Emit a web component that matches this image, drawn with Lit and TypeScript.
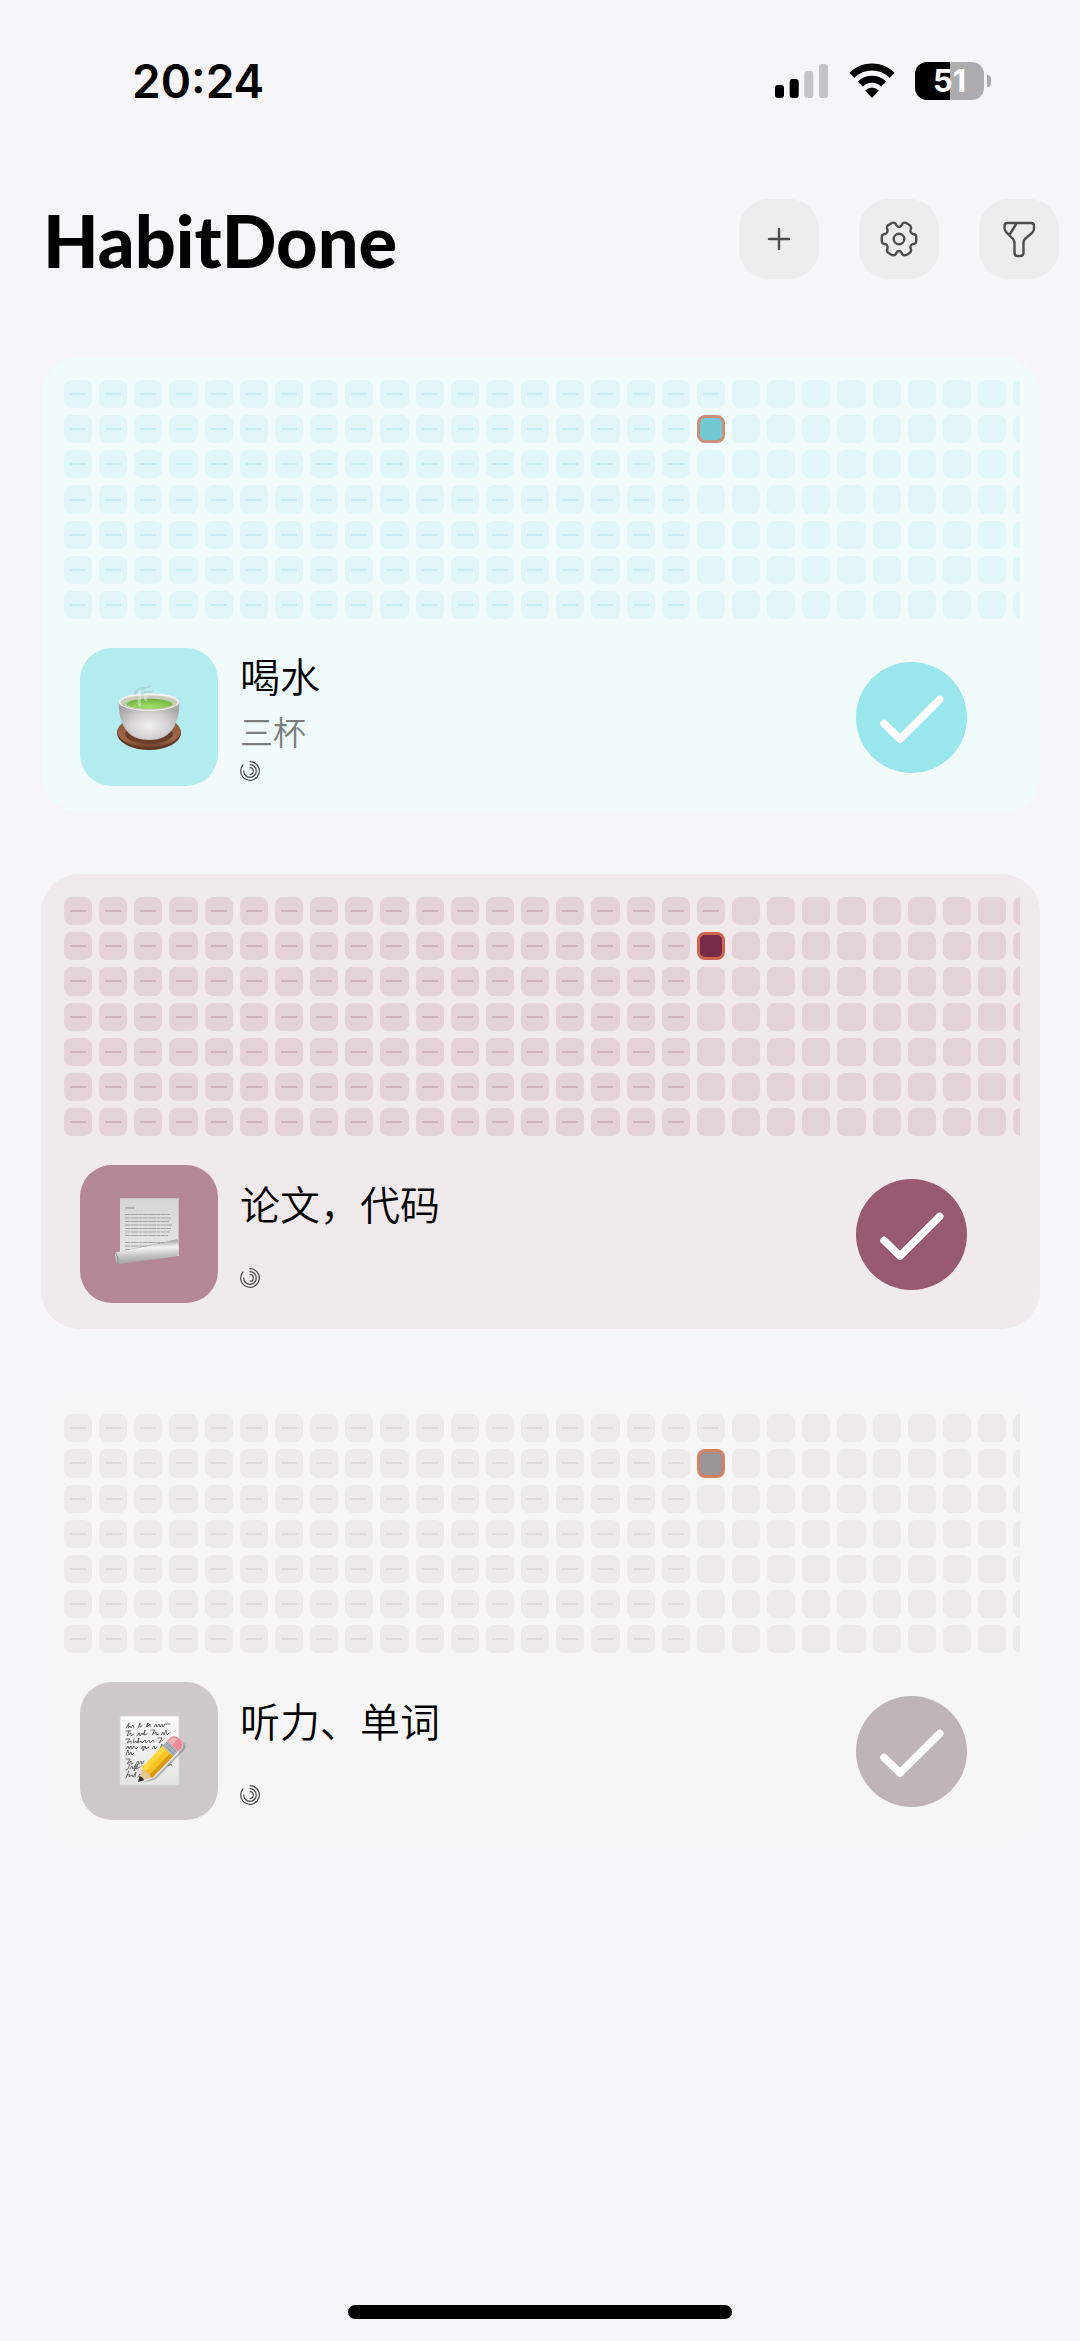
import { LitElement, html, css, svg, nothing } from "lit";
import { customElement, property } from "lit/decorators.js";

interface Habit {
  name: string;
  note: string;
  theme: string;
  picture: string;
}

const HABITS: Habit[] = [
  { name: "喝水", note: "三杯", theme: "aqua", picture: "tea" },
  { name: "论文，代码", note: "", theme: "plum", picture: "page" },
  { name: "听力、单词", note: "", theme: "stone", picture: "memo" },
];

const WEEKS = 28;
const DAYS = 7;
const TODAY_WEEK = 18;
const TODAY_DAY = 1;

const teaPicture = svg`
  <defs>
    <linearGradient id="saucer" x1="0" y1="0" x2="0" y2="1">
      <stop offset="0" stop-color="#8a5638"/><stop offset=".75" stop-color="#a2674a"/><stop offset="1" stop-color="#6d3d27"/>
    </linearGradient>
    <radialGradient id="bowl" cx=".5" cy=".62" r=".6">
      <stop offset="0" stop-color="#f1f0f1"/><stop offset=".5" stop-color="#d6d4d5"/><stop offset="1" stop-color="#a9a6a7"/>
    </radialGradient>
    <radialGradient id="tea" cx=".5" cy=".8" r=".7">
      <stop offset="0" stop-color="#a8e070"/><stop offset="1" stop-color="#71b53d"/>
    </radialGradient>
  </defs>
  <ellipse cx="69" cy="85" rx="32" ry="17" fill="#5f3826"/>
  <ellipse cx="69" cy="83.500" rx="31.500" ry="16" fill="url(#saucer)"/>
  <ellipse cx="69" cy="86" rx="24" ry="10" fill="#6b3f2a"/>
  <path d="M38.500 54 C39 74 45 92 69 92 C93 92 99 74 99.500 54 Z" fill="url(#bowl)"/>
  <ellipse cx="69" cy="54" rx="30.500" ry="8.800" fill="#f4f3f1"/>
  <ellipse cx="69" cy="54.500" rx="28.500" ry="7.300" fill="#c9cdb9"/>
  <path d="M46 56 C50 49 88 49 93 56 C88 62.500 51 62.500 46 56 Z" fill="url(#tea)"/>
  <path d="M60 57 C56 51 64 48 59 43 M66 52 C63 48 71 46 67 40" fill="none" stroke="#e9f3f0" stroke-width="3" stroke-linecap="round" opacity=".45"/>
  <path d="M55 46 C58 38 66 42 70 38 M62 46 C66 42 70 45 73 43" fill="none" stroke="#9fbfc0" stroke-width="2" stroke-linecap="round" opacity=".5"/>`;

const pagePicture = svg`
  <defs>
    <linearGradient id="sheet" x1="0" y1="0" x2="0" y2="1">
      <stop offset="0" stop-color="#d5d5d5"/><stop offset="1" stop-color="#e6e6e6"/>
    </linearGradient>
    <linearGradient id="roll" x1=".45" y1="0" x2=".55" y2="1">
      <stop offset="0" stop-color="#8f8f8f"/><stop offset=".35" stop-color="#f4f4f4"/><stop offset=".65" stop-color="#c5c5c5"/><stop offset="1" stop-color="#9c9c9c"/>
    </linearGradient>
  </defs>
  <path d="M40 33 H99 V91 H40 Z" fill="url(#sheet)"/>
  <path d="M40.500 33.500 H98.500 V90" fill="none" stroke="#c3c1c2"/>
  <path d="M45 43 H55" stroke="#8c8c8c" stroke-width="1"/>
  <path d="M45 49.500 H90 M45 53 H91 M45 56.500 H89 M45 60 H92 M45 63.500 H91 M45 67 H90 M45 70.500 H88 M45 77.500 H84 M45 81 H70 M45 84.500 H54" stroke="#a3a3a3" stroke-width="1.200" stroke-dasharray="5 .6 8 .6 3 .6"/>
  <path d="M41 86 L94 75 L97 77 L96 80 L42 90 Z" fill="#858585" opacity=".5"/>
  <path d="M35 87.500 C52 84 78 80 95 74.500 Q98 73 98.500 78 L99 88 Q99 91 96 91.500 L39 99 Q36 99 35.500 95 Z" fill="url(#roll)"/>
  <path d="M35 87.500 Q38.500 91 38 99" fill="none" stroke="#8f8f8f" stroke-width="1"/>`;

const memoPicture = svg`
  <defs>
    <linearGradient id="paper" x1="0" y1="0" x2="0" y2="1">
      <stop offset="0" stop-color="#fbfbfb"/><stop offset="1" stop-color="#e4e6e4"/>
    </linearGradient>
  </defs>
  <rect x="40" y="34" width="59" height="69" fill="url(#paper)" stroke="#d6d6d5" stroke-width=".8"/>
  <g fill="none" stroke="#4c4c4c" stroke-width=".8" stroke-linecap="round" stroke-linejoin="round">
    <path d="M46 46 l3 -5 l-1 5 l2 -2 l1 2 l2 -3 l1 3 m4 0 l2 -5 v4 l2 -1 m4 1 l2 -4 l-1 4 l3 -3 v3 m4 0 l2 -3 l1 3 l2 -3 l1 3 l2 -3 l1 3 l2 -3 h5"/>
    <path d="M46 49 h5 m-2 0 l-2 5 l4 -3 v3 l3 -2 m3 2 l2 -3 l1 3 l2 -3 l1 2 l2 -5 l-1 5 l3 -1 m4 -4 h4 l-3 5 l4 -3 v3 l3 -1 m2 1 l2 -3 l1 3 l2 -5 l1 5 l2 -2"/>
    <path d="M46 57 h4 l-3 4 l4 -2 v2 m3 -4 l-1 4 l3 -2 l1 2 l2 -5 l-1 5 l3 -2 l1 2 l3 -3 l1 3 l3 -3 l1 3 l3 -3 l1 2 m4 -4 h4 l-3 5 l4 -3"/>
    <path d="M46 67 l2 -3 l1 3 l2 -3 l1 3 l2 -3 l2 3 l2 -2 m3 2 l2 -3 v5 l2 -5 l1 3 l3 -2 m3 2 l2 -3 l1 3 l2 -2 m3 2 l2 -5 v5 l3 -2"/>
    <path d="M46 73 l2 -5 l1 5 l2 -3 l1 3 l2 -2"/>
    <path d="M46 77 h4 l-3 5 l4 -3 v3 l2 -1 m3 1 l2 -3 l1 3 l2 -3 l1 3 l2 -3 m3 3 l2 -3 l1 3 l2 -2"/>
    <path d="M46 88 q4 -1 3 -6 m1 5 l2 -3 l1 3 l3 -5 l-2 7 l4 -7 l-2 5 l4 -2 m28 -1 l3 -2 l1 2"/>
    <path d="M46 96 l3 -7 m-2 4 h3 l-1 2 l3 -2 l1 2 l3 -5 l-1 5 m3 0 l2 -3 l1 3"/>
  </g>
  <g transform="translate(58 100) rotate(-46)">
    <path d="M2 3 L15 9 L54 9 Q60 8 60 3 L60 7 Q59 11 53 11 L14 11 Z" fill="#555" opacity=".4"/>
    <path d="M0 0 L14 -7.500 L14 7.500 Z" fill="#e5c794"/>
    <path d="M0 0 L5.500 -3 Q7 0 5.500 3 Z" fill="#2f2f33"/>
    <path d="M13 -7.500 H43 V-2.500 H14 Q11 -5 13 -7.500 Z" fill="#ffd93b"/>
    <path d="M14 -2.500 H43 V3 H14 Q11.500 0 14 -2.500 Z" fill="#fbc31e"/>
    <path d="M14 3 H43 V7.500 H13 Q11 5 14 3 Z" fill="#d99a0e"/>
    <path d="M43 -7.500 H50 V7.500 H43 Z" fill="#a9b3bd"/>
    <path d="M45 -7.500 V7.500 M48 -7.500 V7.500" stroke="#7f8b97" stroke-width=".8"/>
    <path d="M50 -7.500 H55 Q60 -6 60 0 Q60 6 55 7.500 H50 Z" fill="#ef8b95"/>
    <path d="M50 -6 H55 Q58 -4 58 -1 H50 Z" fill="#f8b0b5"/>
  </g>`;

const PICTURES: Record<string, unknown> = {
  tea: teaPicture,
  page: pagePicture,
  memo: memoPicture,
};

@customElement("status-bar")
class StatusBar extends LitElement {
  static styles = css`
    :host {
      display: block;
    }
    .bar {
      display: flex;
      align-items: center;
      justify-content: space-between;
      height: 164px;
      box-sizing: border-box;
      padding: 0 89px 3px 132px;
    }
    .time {
      font: 600 46px/56px Inter, "Liberation Sans", sans-serif;
      color: #000;
    }
    .signals {
      display: flex;
      align-items: center;
      gap: 20px;
    }
    .signals svg {
      display: block;
    }
    .power {
      display: flex;
      align-items: center;
      gap: 3px;
    }
    .battery {
      width: 69px;
      height: 38px;
      border-radius: 12px;
      background: linear-gradient(to right, #000 51%, #acacae 51%);
      color: #fff;
      font: 700 31px/38px Inter, "Liberation Sans", sans-serif;
      text-align: center;
    }
    .nub {
      width: 4px;
      height: 12px;
      border-radius: 0 4px 4px 0;
      background: #acacae;
    }
  `;

  render() {
    return html`
      <div class="bar">
        <div class="time">20:24</div>
        <div class="signals">
          <svg width="54" height="36" viewBox="0 0 54 36" aria-hidden="true">
            <rect x="0" y="22" width="9" height="13" rx="3" />
            <rect x="14.700" y="16" width="9" height="19" rx="3" />
            <rect x="29.300" y="8" width="9" height="27" rx="3" fill="#c4c4c6" />
            <rect x="44" y="1" width="9" height="34" rx="3" fill="#c4c4c6" />
          </svg>
          <svg width="46" height="36" viewBox="0 0 46 36" aria-hidden="true">
            <path d="M3 12.200 A28.300 28.300 0 0 1 43 12.200" fill="none" stroke="#000" stroke-width="7" />
            <path d="M11.300 21 A16.500 16.500 0 0 1 34.700 21" fill="none" stroke="#000" stroke-width="7" />
            <path d="M16.300 27.500 Q23 21.700 29.700 27.500 L24 34 Q23 35.400 22 34 Z" />
          </svg>
          <div class="power">
            <div class="battery">51</div>
            <div class="nub"></div>
          </div>
        </div>
      </div>
    `;
  }
}

@customElement("habit-card")
class HabitCard extends LitElement {
  @property({ attribute: false }) habit!: Habit;

  static styles = css`
    :host {
      display: block;
    }
    .card {
      padding: 23px 20px 26px 23px;
      border-radius: 38px;
      background: var(--card);
    }
    .aqua {
      --card: #f1fbfc;
      --cell: #e1f6f8;
      --mark: #c8ecf2;
      --today: #72c9d1;
      --ring: #c98f78;
      --tile: #b3ecf0;
      --button: #99e6ec;
    }
    .plum {
      --card: #f1eaec;
      --cell: #e3d2d8;
      --mark: #cdb3bc;
      --today: #752c47;
      --ring: #cf6450;
      --tile: #b38796;
      --button: #985a70;
    }
    .stone {
      --card: #f6f6f6;
      --cell: #eceaeb;
      --mark: #dcdadb;
      --today: #9c9595;
      --ring: #d58367;
      --tile: #cdc9ca;
      --button: #bfb5b6;
    }
    .history {
      overflow: hidden;
    }
    .grid {
      display: grid;
      grid-template-columns: repeat(28, 1fr);
      gap: 7px;
      margin-right: -21px;
    }
    .cell {
      display: grid;
      place-items: center;
      box-sizing: border-box;
      aspect-ratio: 1;
      border-radius: 8px;
      background: var(--cell);
    }
    .missed::after {
      content: "";
      width: 16px;
      height: 2px;
      background: var(--mark);
    }
    .today {
      border: 3px solid var(--ring);
      background: var(--today);
    }
    .row {
      display: flex;
      align-items: center;
      margin-top: 29px;
      padding: 0 53px 0 16px;
    }
    .tile {
      flex: none;
      width: 138px;
      height: 138px;
      border-radius: 32px;
      background: var(--tile);
    }
    .tile svg,
    .done svg,
    .ring {
      display: block;
    }
    .info {
      flex: 1;
      display: flex;
      flex-direction: column;
      gap: 7px;
      padding: 0 22px 4px;
      font-family: "Noto Sans CJK SC", sans-serif;
      font-weight: 350;
    }
    .name {
      margin: 0;
      font-size: 40px;
      line-height: 52px;
      font-weight: 350;
      color: #000;
    }
    .note {
      min-height: 25px;
      margin: 0;
      font-size: 33px;
      line-height: 46px;
      color: #7b7e7f;
    }
    .done {
      flex: none;
      width: 111px;
      height: 111px;
      padding: 0;
      border: 0;
      border-radius: 50%;
      background: var(--button);
      cursor: pointer;
    }
  `;

  private cells() {
    const cells = [];
    for (let day = 0; day < DAYS; day++) {
      for (let week = 0; week < WEEKS; week++) {
        const today = week === TODAY_WEEK && day === TODAY_DAY;
        const past = week < TODAY_WEEK || (week === TODAY_WEEK && day < TODAY_DAY);
        cells.push(html`<div class="cell ${today ? "today" : past ? "missed" : ""}"></div>`);
      }
    }
    return cells;
  }

  render() {
    const { name, note, theme, picture } = this.habit;
    return html`
      <article class="card ${theme}">
        <div class="history"><div class="grid">${this.cells()}</div></div>
        <div class="row">
          <div class="tile">
            <svg width="138" height="138" viewBox="0 0 138 138" aria-hidden="true">${PICTURES[picture]}</svg>
          </div>
          <div class="info">
            <h2 class="name">${name}</h2>
            <p class="note">${note || nothing}</p>
            <svg class="ring" width="20" height="20" viewBox="0 0 20 20" fill="none" stroke="#4a4a4c" stroke-width="1.200" stroke-linecap="round" aria-hidden="true">
              <path d="M10 .7 A9.300 9.300 0 1 1 2.900 4" />
              <path d="M10 3.700 A6.300 6.300 0 1 1 3.700 10" />
              <path d="M10 6.700 A3.300 3.300 0 1 1 10 13.300" />
            </svg>
          </div>
          <button class="done" aria-label=${name}>
            <svg width="111" height="111" viewBox="0 0 111 111" fill="none" stroke="#fff" stroke-width="7.500" stroke-linecap="round" stroke-linejoin="round" aria-hidden="true">
              <path d="M28 61.500 L44 77 L83.700 37.500" />
            </svg>
          </button>
        </div>
      </article>
    `;
  }
}

@customElement("app-root")
class AppRoot extends LitElement {
  static styles = css`
    :host {
      display: block;
    }
    .screen {
      display: flex;
      flex-direction: column;
      min-height: 100vh;
      box-sizing: border-box;
      padding-bottom: 22px;
      background: #f6f6f8;
    }
    .header {
      display: flex;
      align-items: center;
      justify-content: space-between;
      padding: 35px 21px 0 43px;
    }
    .title {
      margin: 0;
      padding-top: 2px;
      font: 900 72px/68px Lato, "Liberation Sans", sans-serif;
      color: #000;
    }
    .actions {
      display: flex;
      gap: 40px;
    }
    .action {
      width: 80px;
      height: 80px;
      padding: 0;
      border: 0;
      border-radius: 30px;
      background: #ededee;
      cursor: pointer;
    }
    .action svg {
      display: block;
    }
    .list {
      display: flex;
      flex-direction: column;
      gap: 62px;
      padding: 78px 40px 61px 41px;
    }
    .home {
      align-self: center;
      width: 384px;
      height: 14px;
      margin-top: auto;
      border-radius: 7px;
      background: #000;
    }
  `;

  private action(label: string, shape: unknown) {
    return html`
      <button class="action" aria-label=${label}>
        <svg width="80" height="80" viewBox="0 0 80 80" fill="none" stroke="#4d4d4f" stroke-width="2.400" stroke-linecap="round" stroke-linejoin="round" aria-hidden="true">
          ${shape}
        </svg>
      </button>
    `;
  }

  render() {
    return html`
      <div class="screen">
        <status-bar></status-bar>
        <header class="header">
          <h1 class="title">HabitDone</h1>
          <nav class="actions">
            ${this.action("Add", svg`<path d="M30 40 H50 M40 30 V50"/>`)}
            ${this.action(
              "Settings",
              svg`<circle cx="40" cy="40" r="5.300"/>
                <path d="M37.500 26.300 Q38.300 28 40 28 Q41.700 28 42.500 26.300 Q43.800 23 46.800 23.800 L50.500 26 Q52.800 27.600 51.700 30.300 Q51 32.200 52 33.600 Q53 35 55 35.200 Q57.200 35.500 57.200 38 V42 Q57.200 44.500 55 44.800 Q53 45 52 46.400 Q51 47.800 51.700 49.700 Q52.800 52.400 50.500 54 L46.800 56.200 Q43.800 57 42.500 53.700 Q41.700 52 40 52 Q38.300 52 37.500 53.700 Q36.200 57 33.200 56.200 L29.500 54 Q27.200 52.400 28.300 49.700 Q29 47.800 28 46.400 Q27 45 25 44.800 Q22.800 44.500 22.800 42 V38 Q22.800 35.500 25 35.200 Q27 35 28 33.600 Q29 32.200 28.300 30.300 Q27.200 27.600 29.500 26 L33.200 23.800 Q36.200 23 37.500 26.300 Z"/>`
            )}
            ${this.action(
              "Filter",
              svg`<path d="M28.500 24 H52 Q55 24 55 27 V30 Q55 32 53 34 L46.500 39.500 Q44.500 41.300 44.500 43.500 V53.500 Q44.500 57 41 57 H38.500 Q35.500 57 35.500 53.500 V44 Q35.500 42 34 40 L27 32.800 Q25.500 31 25.500 29 V27 Q25.500 24 28.500 24 Z M37.500 24.500 L31 35"/>`
            )}
          </nav>
        </header>
        <main class="list">${HABITS.map((habit) => html`<habit-card .habit=${habit}></habit-card>`)}</main>
        <div class="home"></div>
      </div>
    `;
  }
}
